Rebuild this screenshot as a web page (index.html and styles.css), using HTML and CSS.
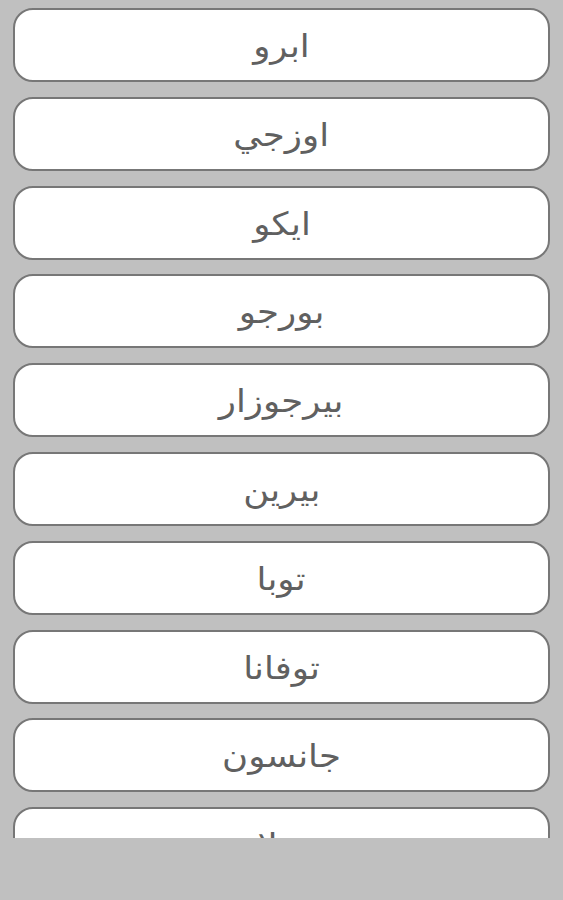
FILE: index.html
```html
<!DOCTYPE html>
<html lang="ar" dir="rtl">
<head>
  <meta charset="UTF-8">
  <title>الماركات</title>
  <link rel="stylesheet" href="styles.css">
</head>
<body>
  <div class="list">
    <button class="item"><span>ابرو</span></button>
    <button class="item"><span>اوزجي</span></button>
    <button class="item"><span>ايكو</span></button>
    <button class="item"><span>بورجو</span></button>
    <button class="item"><span>بيرجوزار</span></button>
    <button class="item"><span>بيرين</span></button>
    <button class="item"><span>توبا</span></button>
    <button class="item"><span>توفانا</span></button>
    <button class="item"><span>جانسون</span></button>
    <button class="item"><span>زيلا</span></button>
  </div>
</body>
</html>
```
FILE: styles.css
```css
* {
  box-sizing: border-box;
}

body {
  margin: 0;
  background: #c0c0c0;
  font-family: "DejaVu Sans", sans-serif;
  height: 900px;
}

.list {
  height: 838px;
  overflow: hidden;
  padding: 8px 13px 0 13px;
  display: flex;
  flex-direction: column;
  gap: 14.8px;
}

.item {
  flex: none;
  height: 74px;
  width: 100%;
  background: #fff;
  border: 2px solid #777;
  border-radius: 20px;
  color: #606060;
  font-family: inherit;
  font-size: 32px;
  line-height: 1;
  padding: 2px 0 0 0;
}

/* the original arabic face is wider than DejaVu */
.item span {
  display: inline-block;
  transform: scaleX(1.11);
}
```
